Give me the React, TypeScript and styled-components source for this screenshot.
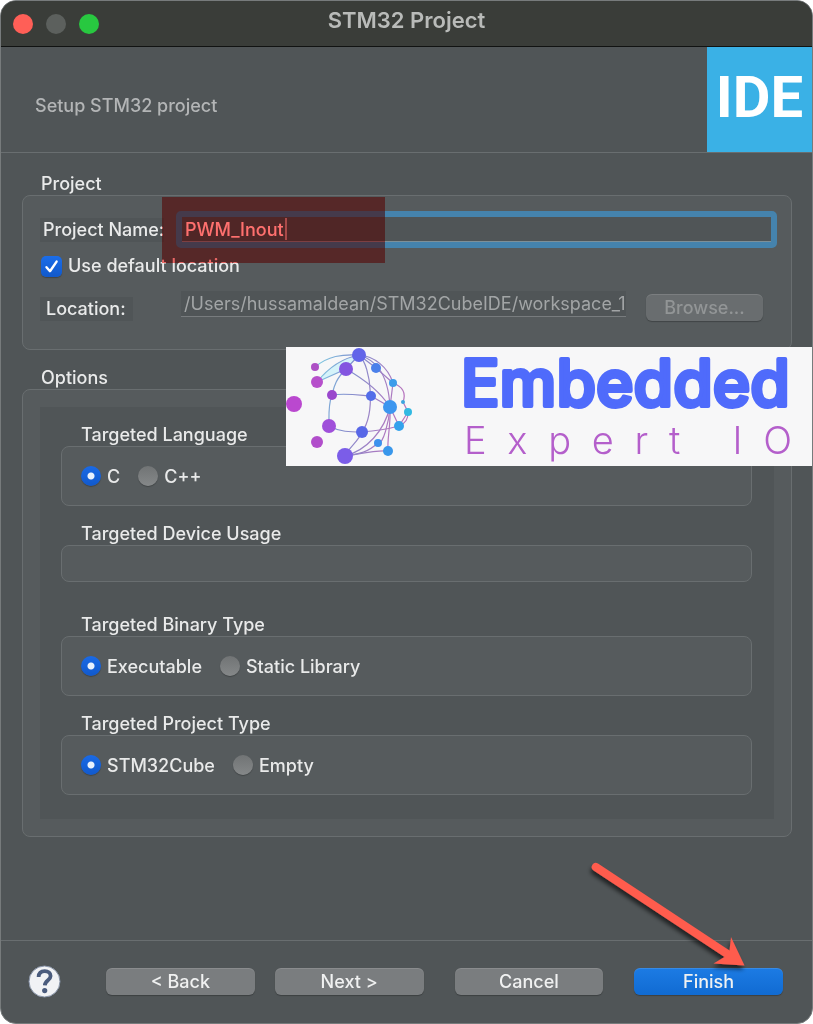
import React, { useState } from "react";
import styled, { createGlobalStyle } from "styled-components";

const base = "#505557";
const raised = "#565b5d";
const line = "#696e70";
const text = "#e9eaea";

const GlobalStyle = createGlobalStyle`
  * { box-sizing: border-box; }
  body {
    margin: 0;
    background: #fff;
    font-family: Inter, "Liberation Sans", sans-serif;
    font-size: 18px;
    font-weight: 500;
    line-height: 24px;
    color: ${text};
  }
  button, input { font: inherit; color: inherit; }
`;

const Dialog = styled.main`
  display: flex;
  flex-direction: column;
  min-height: 100vh;
  background: ${base};
  border: 1px solid #777b7c;
  border-radius: 16px;
  overflow: hidden;
`;

const TitleBar = styled.header`
  display: grid;
  grid-template-columns: 1fr auto 1fr;
  align-items: center;
  height: 46px;
  padding: 0 12px;
  background: #3a3d39;
  border-bottom: 1px solid #111312;
`;

const Lights = styled.div`
  display: flex;
  gap: 13px;
`;

const Light = styled.button<{ $color: string }>`
  width: 20px;
  height: 20px;
  padding: 0;
  border: 0;
  border-radius: 50%;
  background: ${(p) => p.$color};
`;

const Title = styled.h1`
  margin: 0;
  padding-bottom: 8px;
  font-size: 22px;
  font-weight: 600;
  color: #b9bbb9;
`;

const Banner = styled.section`
  display: flex;
  justify-content: space-between;
  align-items: stretch;
  height: 106px;
  padding-left: 34px;
  border-bottom: 1px solid ${line};
`;

const BannerText = styled.p`
  margin: 0;
  align-self: center;
  padding-top: 13px;
  color: #b3b5b6;
`;

const IdeBadge = styled.div`
  width: 105px;
  padding-top: 14px;
  background: #3ab1e6;
  color: #fff;
  font-family: Roboto, sans-serif;
  font-size: 58px;
  font-weight: 700;
  line-height: 72px;
  text-align: center;
`;

const Body = styled.div`
  position: relative;
  flex: 1;
  display: flex;
  flex-direction: column;
  gap: 15px;
  padding: 18px 20px 24px 21px;
`;

const Group = styled.fieldset`
  min-width: 0;
  margin: 0;
  padding: 0;
  border: 0;
`;

const Legend = styled.legend`
  display: block;
  padding: 2px 20px 0 19px;
  line-height: 22px;
`;

const ChoiceLegend = styled(Legend)`
  padding-left: 20px;
`;

const ProjectBox = styled.div`
  position: relative;
  height: 155px;
  padding: 15px 14px 0 17px;
  background: ${raised};
  border: 1px solid ${line};
  border-radius: 8px;
`;

const OptionsBox = styled.div`
  padding: 17px;
  background: ${raised};
  border: 1px solid ${line};
  border-radius: 8px;
`;

const OptionsPanel = styled.div`
  display: flex;
  flex-direction: column;
  gap: 15px;
  padding: 15px 22px 24px 21px;
  background: ${base};
`;

const ChoiceBox = styled.div<{ $empty?: boolean }>`
  display: flex;
  align-items: center;
  gap: 18px;
  height: ${(p) => (p.$empty ? 37 : 60)}px;
  margin-bottom: ${(p) => (p.$empty ? 15 : 0)}px;
  padding: 0 19px;
  background: ${raised};
  border: 1px solid ${line};
  border-radius: 8px;
`;

const Choice = styled.label`
  display: flex;
  align-items: center;
  gap: 6px;
  span { padding-top: 2px; }
`;

const Radio = styled.input`
  appearance: none;
  flex: none;
  width: 20px;
  height: 20px;
  margin: 0;
  border-radius: 50%;
  background: linear-gradient(#717475, #858889);
  box-shadow: 0 1px 1px rgba(0, 0, 0, 0.25);
  &:checked {
    background: radial-gradient(circle, #e9f1fd 0 3px, transparent 4px),
      linear-gradient(#1a6ae6, #1159cc);
  }
`;

const Row = styled.div`
  display: flex;
  align-items: center;
`;

const LocationRow = styled(Row)`
  align-items: flex-end;
`;

const LabelCell = styled.div`
  display: flex;
  flex: none;
  width: 136px;
`;

const FieldLabel = styled.label<{ $inset?: boolean }>`
  padding: 0 ${(p) => (p.$inset ? 7 : 0)}px 0 ${(p) => (p.$inset ? 6 : 3)}px;
  background: ${base};
`;

const NameField = styled.div`
  position: relative;
  flex: 1;
  display: flex;
  min-width: 0;
  border: 6px solid #4583ad;
  border-radius: 5px;
`;

const NameInput = styled.input`
  width: 100%;
  height: 25px;
  padding: 0 3px;
  border: 0;
  border-bottom: 1px solid #7d9099;
  outline: 0;
  background: ${base};
  color: #fff;
`;

const Caret = styled.span`
  position: absolute;
  left: 103px;
  top: 1px;
  width: 2px;
  height: 22px;
  background: #a9a9a9;
`;

const CheckRow = styled.label`
  display: flex;
  align-items: center;
  gap: 6px;
  padding: 6px 0 13px 1px;
`;

const CheckHolder = styled.span`
  position: relative;
  display: flex;
  svg {
    position: absolute;
    inset: 0;
    pointer-events: none;
  }
`;

const Check = styled.input`
  appearance: none;
  width: 21px;
  height: 21px;
  margin: 0;
  border-radius: 5px;
  background: linear-gradient(#1b6de9, #1159cb);
  box-shadow: 0 1px 1px rgba(0, 0, 0, 0.25);
`;

const LocationInput = styled.input`
  flex: 1;
  min-width: 0;
  height: 26px;
  margin: 0 20px 4px 5px;
  padding: 0 0 0 3px;
  border: 0;
  border-bottom: 1px solid #787c7e;
  background: ${base};
  color: #a2a5a6;
  font-weight: 400;
`;

const Button = styled.button<{ $kind?: "primary" | "disabled" }>`
  flex: 1;
  height: 27px;
  padding: 0;
  border: 0;
  border-radius: 6px;
  line-height: 27px;
  box-shadow: 0 1px 1px rgba(0, 0, 0, 0.25), inset 0 1px 0 rgba(255, 255, 255, 0.12);
  color: ${(p) => (p.$kind === "disabled" ? "#929596" : "#f0f1f1")};
  background: ${(p) =>
    p.$kind === "primary"
      ? "linear-gradient(#1c7be4, #116bd2)"
      : p.$kind === "disabled"
        ? "#696d6f"
        : "#7a7d7f"};
`;

const BrowseSlot = styled.div`
  display: flex;
  flex: none;
  width: 117px;
  margin-right: 14px;
`;

const Highlight = styled.div`
  position: absolute;
  left: 139px;
  top: 1px;
  width: 223px;
  height: 66px;
  background: #ff706e;
  mix-blend-mode: multiply;
  pointer-events: none;
`;

const Brand = styled.aside`
  position: absolute;
  top: 194px;
  right: 0;
  display: flex;
  width: 526px;
  height: 119px;
  background: #f7f7f8;
`;

const BrandWords = styled.div`
  padding-left: 42px;
`;

const BrandName = styled.svg`
  display: block;
  margin-bottom: -8px;
  overflow: visible;
  font-size: 64px;
  font-weight: 500;
  fill: #4f6bfb;
  stroke: #4f6bfb;
  stroke-width: 4px;
  stroke-linejoin: round;
`;

const BrandSub = styled.div`
  display: flex;
  justify-content: space-between;
  width: 328px;
  margin-left: 4px;
  font-size: 38px;
  font-weight: 300;
  line-height: 46px;
  color: #b45fcb;
`;

const Footer = styled.footer`
  position: relative;
  display: flex;
  align-items: center;
  height: 83px;
  padding: 0 29px 2px 27px;
  border-top: 1px solid ${line};
`;

const HelpButton = styled.button`
  display: flex;
  padding: 0;
  border: 0;
  background: none;
`;

const Actions = styled.div`
  flex: 1;
  display: flex;
  gap: 20px;
  margin-left: 45px;
  button:nth-child(n + 3) { margin-left: 11px; }
`;

const Arrow = styled.svg`
  position: absolute;
  right: 60px;
  bottom: 44px;
  pointer-events: none;
`;

const edges = [
  "M35 20C48 9 62 7 79 8", "M37 35C49 20 63 11 79 8", "M37 35L66 22L79 8",
  "M66 22C55 33 54 40 52 48C48 58 49 68 49 79", "M52 48C65 46 78 48 91 49",
  "M66 22C82 31 99 43 110 60", "M79 8C92 20 95 67 82 85",
  "M79 8C92 12 108 22 110 60", "M79 8C94 9 108 20 113 36L110 60",
  "M79 8L96 21L113 36", "M91 49L110 60L119 79", "M49 79C60 85 70 85 82 85",
  "M82 85C96 84 108 82 119 79L128 65", "M119 79C126 76 128 72 128 65L123 55C127 44 121 39 113 36",
  "M82 85C78 95 70 99 65 109", "M110 60C104 84 87 103 65 109",
  "M110 60C109 75 103 98 98 96C88 105 80 107 65 109",
  "M110 60C111 78 107 91 108 104C94 103 80 107 65 109",
];

const nodes: [number, number, number, string][] = [
  [79, 8, 7, "#6265e9"], [66, 22, 7, "#8355e0"], [35, 20, 4, "#ad50c5"],
  [37, 35, 6, "#b64fcb"], [14, 57, 8, "#ba48cf"], [52, 48, 5, "#9a48cd"],
  [49, 79, 7, "#9f4fda"], [37, 95, 6, "#b14ecb"], [65, 109, 8, "#7b5de8"],
  [82, 85, 6, "#5867e7"], [91, 49, 5, "#536de9"], [96, 21, 5, "#4b80ea"],
  [113, 36, 4, "#3d9cea"], [110, 60, 7, "#3c96ef"], [123, 55, 2, "#3ca5df"],
  [128, 65, 4, "#32b9e2"], [119, 79, 5, "#34a2ec"], [98, 96, 4, "#3d91ed"],
  [108, 104, 5, "#3997eb"],
];

function Globe() {
  return (
    <svg width="132" height="119" viewBox="6 0 132 119" aria-hidden="true">
      <defs>
        <linearGradient id="edge" gradientUnits="userSpaceOnUse" x1="35" y1="0" x2="130" y2="20">
          <stop offset="0" stopColor="#7fd3e4" />
          <stop offset="0.4" stopColor="#7f91cf" />
          <stop offset="1" stopColor="#b774bd" />
        </linearGradient>
      </defs>
      <path d="M37 35C49 20 63 11 79 8L66 22Z" fill="#d5f3fa" />
      {edges.map((d) => (
        <path key={d} d={d} fill="none" stroke="url(#edge)" strokeWidth="1.2" />
      ))}
      {nodes.map(([x, y, r, c]) => (
        <circle key={`${x}-${y}`} cx={x} cy={y} r={r} fill={c} />
      ))}
    </svg>
  );
}

interface ChoiceGroupProps {
  legend: string;
  name: string;
  options: string[];
}

function ChoiceGroup({ legend, name, options }: ChoiceGroupProps) {
  const [value, setValue] = useState(options[0]);
  return (
    <Group>
      <ChoiceLegend>{legend}</ChoiceLegend>
      <ChoiceBox $empty={options.length === 0}>
        {options.map((o) => (
          <Choice key={o}>
            <Radio type="radio" name={name} checked={value === o} onChange={() => setValue(o)} />
            <span>{o}</span>
          </Choice>
        ))}
      </ChoiceBox>
    </Group>
  );
}

export default function App() {
  const [name, setName] = useState("PWM_Inout");
  return (
    <>
      <GlobalStyle />
      <Dialog>
        <TitleBar>
          <Lights>
            <Light $color="#ff5f57" aria-label="Close" />
            <Light $color="#5c605d" aria-label="Minimize" />
            <Light $color="#28c840" aria-label="Zoom" />
          </Lights>
          <Title>STM32 Project</Title>
        </TitleBar>
        <Banner>
          <BannerText>Setup STM32 project</BannerText>
          <IdeBadge>IDE</IdeBadge>
        </Banner>
        <Body>
          <Group>
            <Legend>Project</Legend>
            <ProjectBox>
              <Row>
                <LabelCell>
                  <FieldLabel htmlFor="name">Project Name:</FieldLabel>
                </LabelCell>
                <NameField>
                  <NameInput id="name" value={name} onChange={(e) => setName(e.target.value)} />
                  <Caret />
                </NameField>
              </Row>
              <CheckRow>
                <CheckHolder>
                  <Check type="checkbox" defaultChecked />
                  <svg width="21" height="21" viewBox="0 0 21 21" aria-hidden="true">
                    <path d="M5.5 11.2L9 15.2L15.6 5.6" fill="none" stroke="#fff" strokeWidth="2.4" strokeLinecap="round" strokeLinejoin="round" />
                  </svg>
                </CheckHolder>
                Use default location
              </CheckRow>
              <LocationRow>
                <LabelCell>
                  <FieldLabel htmlFor="location" $inset>Location:</FieldLabel>
                </LabelCell>
                <LocationInput id="location" disabled defaultValue="/Users/hussamaldean/STM32CubeIDE/workspace_1" />
                <BrowseSlot>
                  <Button $kind="disabled" disabled>Browse...</Button>
                </BrowseSlot>
              </LocationRow>
              <Highlight />
            </ProjectBox>
          </Group>
          <Group>
            <Legend>Options</Legend>
            <OptionsBox>
              <OptionsPanel>
                <ChoiceGroup legend="Targeted Language" name="language" options={["C", "C++"]} />
                <ChoiceGroup legend="Targeted Device Usage" name="usage" options={[]} />
                <ChoiceGroup legend="Targeted Binary Type" name="binary" options={["Executable", "Static Library"]} />
                <ChoiceGroup legend="Targeted Project Type" name="project" options={["STM32Cube", "Empty"]} />
              </OptionsPanel>
            </OptionsBox>
          </Group>
          <Brand>
            <Globe />
            <BrandWords>
              <BrandName width="340" height="78" viewBox="0 0 340 78">
                <text x="1" y="59">Embedded</text>
              </BrandName>
              <BrandSub>
                {["E", "x", "p", "e", "r", "t", "\u00a0", "I", "O"].map((c, i) => (
                  <span key={i}>{c}</span>
                ))}
              </BrandSub>
            </BrandWords>
          </Brand>
        </Body>
        <Footer>
          <HelpButton aria-label="Help">
            <svg width="33" height="33" viewBox="0 0 33 33" aria-hidden="true">
              <circle cx="16.5" cy="16.5" r="15.5" fill="#f1f2f5" stroke="#8793a8" strokeWidth="1" />
              <path d="M10.600 12C10.800 8.200 13 6.200 16.700 6.200C20.300 6.200 22.600 8.100 22.600 11.100C22.600 15.200 17 15.300 16.800 20.300" fill="none" stroke="#4a5b7d" strokeWidth="3.8" />
              <circle cx="16.7" cy="25.6" r="2.6" fill="#4a5b7d" />
            </svg>
          </HelpButton>
          <Actions>
            <Button>&lt; Back</Button>
            <Button>Next &gt;</Button>
            <Button>Cancel</Button>
            <Button $kind="primary">Finish</Button>
          </Actions>
          <Arrow width="168" height="120" viewBox="0 0 168 120" aria-hidden="true">
            <defs>
              <filter id="shade" x="-20%" y="-20%" width="140%" height="140%">
                <feDropShadow dx="-1" dy="4" stdDeviation="2" floodColor="#000" floodOpacity="0.6" />
              </filter>
            </defs>
            <path d="M14 4.600L145.500 91.400L147 78L160.500 106.500L129.500 104.500L140.500 98L9.600 11.400A4 4 0 0 1 14 4.600Z" fill="#ff5b4d" filter="url(#shade)" />
          </Arrow>
        </Footer>
      </Dialog>
    </>
  );
}
